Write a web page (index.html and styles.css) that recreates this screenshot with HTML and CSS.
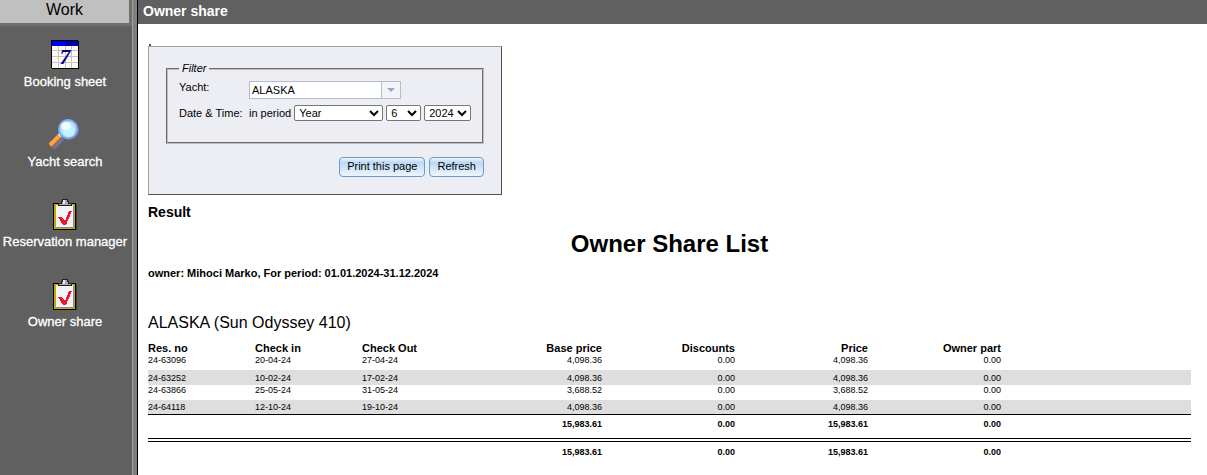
FILE: index.html
```html
<!DOCTYPE html>
<html lang="en">
<head>
  <meta charset="UTF-8">
  <meta name="viewport" content="width=device-width, initial-scale=1.0">
  <title>Owner share</title>
  <link rel="stylesheet" href="styles.css">
</head>
<body>
  <!-- shared icon for the two clipboard links -->
  <svg class="defs" aria-hidden="true">
    <symbol id="clipboard" viewBox="0 0 32 32">
      <path d="M5 6h23v26H5z" fill="#3c3c3c"/>
      <path d="M4 5h23v27H4z" fill="#000"/>
      <path d="M5 6h21v25H5z" fill="#c8a400"/>
      <path d="M7 7h18v23H7z" fill="#8a8a8a"/>
      <path d="M7 7h17v22H7z" fill="#f4f4fa"/>
      <path d="M9 8V5h3V3h1V1h6v2h1v2h3v3z" fill="#222"/>
      <path d="M10 7V6h3V4h1V2h4v2h1v2h3v1z" fill="#a8a8a8"/>
      <path d="M14 2h2v4h-2z" fill="#e8e8e8"/>
      <path d="M9 19h4l3 4 4-10h3l-6 14h-3z" fill="#f01428"/>
    </symbol>
  </svg>

  <div class="page">
    <nav class="sidebar">
      <div class="menu-title">Work</div>
      <a class="menu-item" href="#">
        <svg class="icon" viewBox="0 0 32 32" shape-rendering="crispEdges">
          <path d="M2 2h27v1h1v28H3v-1H2z" fill="#000"/>
          <path d="M3 3h26v27H3z" fill="#fffaf4"/>
          <path d="M3 3h26v5H3z" fill="#0000b0"/>
          <path d="M3 3h13v5H3z" fill="#0000f0"/>
          <path d="M9 8h1v22H9zM16 8h1v22h-1zM22 8h1v22h-1zM3 12h26v1H3zM3 18h26v1H3zM3 24h26v1H3z" fill="#c4c4c4"/>
          <text x="16" y="26" class="day">7</text>
        </svg>
        <span>Booking sheet</span>
      </a>
      <a class="menu-item" href="#">
        <svg class="icon" viewBox="0 0 32 32">
          <path d="M4 30l10-10" stroke="#77739a" stroke-width="4"/>
          <path d="M1 28l9-9" stroke="#b8661e" stroke-width="5"/>
          <path d="M1 27l9-9" stroke="#ffa43c" stroke-width="4"/>
          <path d="M10 18l3-3" stroke="#d8d8ec" stroke-width="4"/>
          <circle cx="20" cy="12" r="10" fill="#7375a8"/>
          <circle cx="19" cy="11" r="9" fill="#b4e2ff" stroke="#7fb2f0" stroke-width="2"/>
          <circle cx="20" cy="13" r="6" fill="#c7f2ff"/>
          <ellipse cx="17" cy="8" rx="5" ry="4" fill="#f0fbff"/>
        </svg>
        <span>Yacht search</span>
      </a>
      <a class="menu-item" href="#">
        <svg class="icon" shape-rendering="crispEdges"><use href="#clipboard"/></svg>
        <span>Reservation manager</span>
      </a>
      <a class="menu-item" href="#">
        <svg class="icon" shape-rendering="crispEdges"><use href="#clipboard"/></svg>
        <span>Owner share</span>
      </a>
    </nav>

    <main class="main">
      <div class="title-bar">Owner share</div>
      <div class="content">
        <div class="marker"></div>
        <form class="filter">
          <fieldset>
            <legend>Filter</legend>
            <div class="row yacht">
              <label class="name" for="yacht">Yacht:</label>
              <div class="combo">
                <input type="text" id="yacht" value="ALASKA">
                <button type="button" aria-label="Show yachts">
                  <svg width="8" height="4" viewBox="0 0 8 4"><path d="M0 0h8L4 4z" fill="#8eaad4"/></svg>
                </button>
              </div>
            </div>
            <div class="row period">
              <label class="name" for="period">Date &amp; Time:</label>
              <span>in period</span>
              <select id="period" class="wide"><option>Year</option></select>
              <select class="month" aria-label="Month"><option>6</option></select>
              <select class="year" aria-label="Year"><option>2024</option></select>
            </div>
          </fieldset>
          <div class="actions">
            <button type="button">Print this page</button>
            <button type="submit">Refresh</button>
          </div>
        </form>

        <h2>Result</h2>
        <h1>Owner Share List</h1>
        <p class="owner">owner: Mihoci Marko, For period: 01.01.2024-31.12.2024</p>
        <h3>ALASKA (Sun Odyssey 410)</h3>

        <table>
          <colgroup>
            <col class="c-text" span="3">
            <col class="c-num" span="4">
            <col>
          </colgroup>
          <thead>
            <tr>
              <th>Res. no</th><th>Check in</th><th>Check Out</th>
              <th class="num">Base price</th><th class="num">Discounts</th><th class="num">Price</th><th class="num">Owner part</th><th></th>
            </tr>
          </thead>
          <tbody>
            <tr>
              <td>24-63096</td><td>20-04-24</td><td>27-04-24</td>
              <td class="num">4,098.36</td><td class="num">0.00</td><td class="num">4,098.36</td><td class="num">0.00</td><td></td>
            </tr>
            <tr class="alt">
              <td>24-63252</td><td>10-02-24</td><td>17-02-24</td>
              <td class="num">4,098.36</td><td class="num">0.00</td><td class="num">4,098.36</td><td class="num">0.00</td><td></td>
            </tr>
            <tr>
              <td>24-63866</td><td>25-05-24</td><td>31-05-24</td>
              <td class="num">3,688.52</td><td class="num">0.00</td><td class="num">3,688.52</td><td class="num">0.00</td><td></td>
            </tr>
            <tr class="alt">
              <td>24-64118</td><td>12-10-24</td><td>19-10-24</td>
              <td class="num">4,098.36</td><td class="num">0.00</td><td class="num">4,098.36</td><td class="num">0.00</td><td></td>
            </tr>
          </tbody>
          <tfoot>
            <tr class="subtotal">
              <td></td><td></td><td></td>
              <td class="num">15,983.61</td><td class="num">0.00</td><td class="num">15,983.61</td><td class="num">0.00</td><td></td>
            </tr>
            <tr class="total">
              <td></td><td></td><td></td>
              <td class="num">15,983.61</td><td class="num">0.00</td><td class="num">15,983.61</td><td class="num">0.00</td><td></td>
            </tr>
          </tfoot>
        </table>
      </div>
    </main>
  </div>
</body>
</html>
```

FILE: styles.css
```css
* {
  box-sizing: border-box;
}

body {
  margin: 0;
  font-family: "Liberation Sans", Arial, sans-serif;
  font-size: 11px;
  color: #000;
  background: #fff;
}

.defs {
  display: none;
}

.page {
  display: flex;
  min-height: 100vh;
}

/* left menu */
.sidebar {
  flex: none;
  width: 138px;
  background: #606060;
  border-right: 1px solid #000;
  box-shadow: inset -4px 0 #808080, inset -5px 0 #a0a0a0;
}

.menu-title {
  width: 132px;
  height: 26px;
  margin-bottom: 12px;
  border-right: 3px solid #707070;
  border-bottom: 3px solid #707070;
  background: #c0c0c0;
  font-size: 16px;
  line-height: 20px;
  text-align: center;
}

.menu-item {
  display: flex;
  flex-direction: column;
  align-items: center;
  gap: 4px;
  width: 130px;
  height: 80px;
  color: #fff;
  font-size: 13px;
  line-height: 16px;
  text-decoration: none;
  white-space: nowrap;
  -webkit-text-stroke: 0.3px #fff;
}

.icon {
  width: 32px;
  height: 32px;
}

.day {
  font: italic bold 22px "Liberation Serif", serif;
  fill: #000090;
  text-anchor: middle;
  -webkit-text-stroke: 0;
}

/* right side */
.main {
  flex: 1;
  min-width: 0;
}

.title-bar {
  height: 24px;
  padding-left: 5px;
  background: #606060;
  color: #fff;
  font-size: 14px;
  font-weight: bold;
  line-height: 23px;
}

.content {
  padding: 20px 16px 0 10px;
}

.marker {
  width: 2px;
  height: 2px;
  margin-left: 1px;
  background: #555;
}

.filter {
  width: 354px;
  height: 149px;
  padding: 15px 17px;
  border: 1px solid;
  border-color: #a0a0a0 #505050 #505050 #a0a0a0;
  background: #ededf4;
}

fieldset {
  height: 82px;
  margin: 0;
  padding: 6px 11px;
  border: 2px groove #c0c0c0;
}

legend {
  padding: 0 3px;
  font-style: italic;
  line-height: 13px;
}

.row {
  display: flex;
  align-items: center;
  height: 23px;
  white-space: nowrap;
}

.yacht {
  align-items: flex-start;
  height: 20px;
}

.name {
  width: 70px;
}

.combo {
  display: flex;
  width: 152px;
  height: 18px;
  border: 1px solid #b0bcd0;
}

.combo input {
  flex: 1;
  min-width: 0;
  padding: 0 2px;
  border: 0;
  font: inherit;
}

.combo button {
  display: flex;
  align-items: center;
  justify-content: center;
  width: 19px;
  padding: 0;
  border: 0;
  border-left: 1px solid #b0bcd0;
  background: #f4f4f6;
}

select {
  height: 16px;
  margin-left: 3px;
  padding: 0;
  border: 1px solid #767676;
  border-radius: 2px;
  background-color: #fff;
  font: inherit;
}

.wide {
  width: 89px;
}

.month {
  width: 35px;
}

.year {
  width: 47px;
}

.actions {
  display: flex;
  justify-content: flex-end;
  gap: 4px;
  margin-top: 13px;
}

.actions button {
  height: 20px;
  padding: 0 7px 2px;
  border: 1px solid #6b9cc8;
  border-radius: 4px;
  background: linear-gradient(#f0f6fd 0%, #bdd9f5 25%, #d3e6fa 60%, #eef6ff 100%);
  font: inherit;
}

/* report */
h2 {
  margin: 9px 0 0;
  font-size: 14px;
  line-height: 16px;
}

h1 {
  margin: 10px 0 9px;
  font-size: 24px;
  line-height: 28px;
  text-align: center;
}

.owner {
  margin: 0;
  font-weight: bold;
  line-height: 12px;
}

h3 {
  margin: 35px 0 10px;
  font-size: 16px;
  font-weight: normal;
  line-height: 18px;
}

table {
  width: 100%;
  table-layout: fixed;
  border-collapse: separate;
  border-spacing: 0;
  font-size: 9px;
  line-height: 11px;
}

.c-text {
  width: 107px;
}

.c-num {
  width: 133px;
}

th,
td {
  padding: 0;
  text-align: left;
  vertical-align: top;
}

th {
  height: 13px;
  font-size: 11px;
  line-height: 13px;
}

td {
  height: 15px;
}

.num {
  text-align: right;
}

.alt td {
  padding-top: 3px;
  background: #dedede;
}

.alt:last-child td {
  padding-top: 2px;
  border-bottom: 1px solid #000;
}

.subtotal td {
  height: 23px;
  padding-top: 4px;
  font-weight: bold;
}

.total td {
  padding-top: 5px;
  border-top: 4px double #000;
  font-weight: bold;
}
```
